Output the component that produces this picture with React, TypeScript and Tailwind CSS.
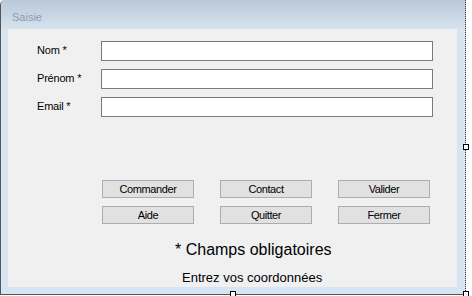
import React from "react";

function Field({ label, first }: { label: string; first?: boolean }) {
  return (
    <div className={`flex items-start h-[20px] ${first ? "" : "mt-[8px]"}`}>
      <div className="w-[64px] ml-[29px] pt-[3px] text-[11px] leading-[13px] text-black tracking-[-0.2px]">{label}</div>
      <div className="w-[332px] h-[20px] bg-white border border-[#7a7a7a]" />
    </div>
  );
}

function Btn({ label }: { label: string }) {
  return (
    <div className="w-[92px] h-[18px] bg-[#e1e1e1] border border-[#adadad] flex items-center justify-center text-[11px] leading-[13px] text-black tracking-[-0.4px]">
      {label}
    </div>
  );
}

export default function App() {
  return (
    <div className="w-[472px] h-[296px] bg-white relative overflow-hidden" style={{ fontFamily: '"Liberation Sans", Arial, sans-serif' }}>
      <div className="w-[466px] h-[295px] flex flex-col border-l border-b border-[#555] rounded-tl-[5px] rounded-tr-[3px] bg-[#d7e4f2] overflow-hidden">
        <div className="h-[29px] shrink-0 bg-gradient-to-b from-[#b9c9d9] to-[#d6e2ee] pl-[11px] pt-[11px] text-[11px] leading-[13px] text-[#8b9bab]">
          Saisie
        </div>
        <div className="flex h-[258px]">
          <div className="w-[7px] bg-[#d7e4f2]" />
          <div className="w-[449px] bg-[#f0f0f0] flex flex-col pt-[12px]">
            <Field label="Nom *" first />
            <Field label="Prénom *" />
            <Field label="Email *" />
            <div className="mt-[63px] ml-[94px] grid grid-cols-[92px_92px_92px] gap-x-[26px] gap-y-[8px]">
              <Btn label="Commander" />
              <Btn label="Contact" />
              <Btn label="Valider" />
              <Btn label="Aide" />
              <Btn label="Quitter" />
              <Btn label="Fermer" />
            </div>
            <div className="mt-[17px] ml-[167px] text-[16px] leading-[18px] text-black">* Champs obligatoires</div>
            <div className="mt-[11px] ml-[174px] text-[13px] leading-[15px] text-black">Entrez vos coordonnées</div>
          </div>
          <div className="flex-1 bg-[#d7e4f2]" />
        </div>
      </div>
      <div className="absolute left-[465px] top-0 h-[295px] border-l border-dotted border-[#333]" />
      <div className="absolute left-[463px] top-[144px] w-[6px] h-[6px] bg-white border border-black" />
      <div className="absolute left-[230px] top-[291px] w-[6px] h-[6px] bg-white border border-black" />
      <div className="absolute left-[463px] top-[291px] w-[6px] h-[6px] bg-white border border-black" />
    </div>
  );
}
